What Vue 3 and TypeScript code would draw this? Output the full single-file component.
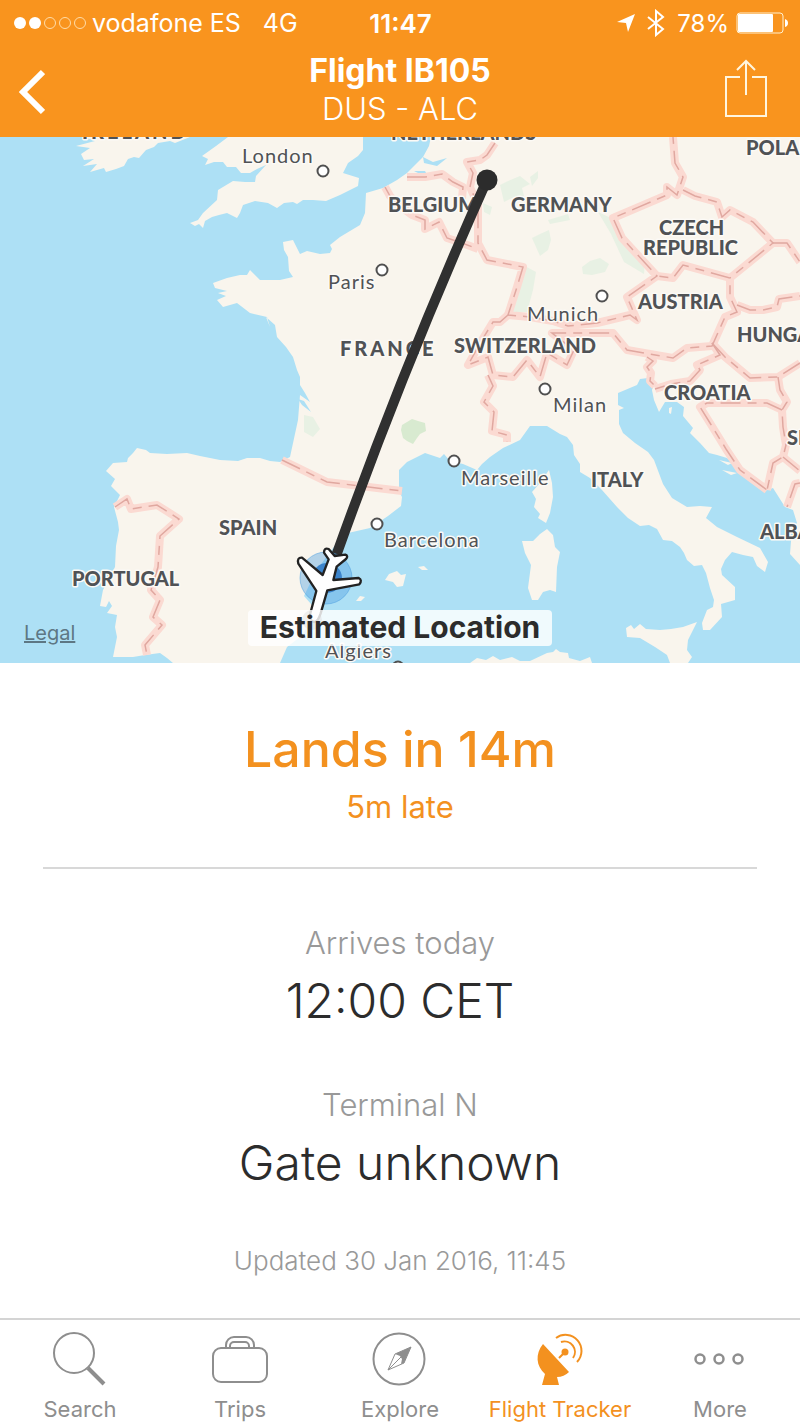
<script setup lang="ts">
import { ref } from 'vue'

type TabId = 'search' | 'trips' | 'explore' | 'tracker' | 'more'

interface MapLabel {
  text: string
  x: number
  y: number
  kind: 'country' | 'wide' | 'city'
}

const tabs: { id: TabId; label: string }[] = [
  { id: 'search', label: 'Search' },
  { id: 'trips', label: 'Trips' },
  { id: 'explore', label: 'Explore' },
  { id: 'tracker', label: 'Flight Tracker' },
  { id: 'more', label: 'More' },
]
const activeTab = ref<TabId>('tracker')

const labels: MapLabel[] = [
  { text: 'IRELAND', x: 82, y: 139, kind: 'wide' },
  { text: 'NETHERLANDS', x: 391, y: 140, kind: 'country' },
  { text: 'POLAND', x: 746, y: 155, kind: 'country' },
  { text: 'BELGIUM', x: 388, y: 212, kind: 'country' },
  { text: 'GERMANY', x: 511, y: 212, kind: 'country' },
  { text: 'CZECH', x: 659, y: 235, kind: 'country' },
  { text: 'REPUBLIC', x: 643, y: 255, kind: 'country' },
  { text: 'AUSTRIA', x: 638, y: 309, kind: 'country' },
  { text: 'HUNGARY', x: 737, y: 342, kind: 'country' },
  { text: 'FRANCE', x: 340, y: 356, kind: 'wide' },
  { text: 'SWITZERLAND', x: 454, y: 353, kind: 'country' },
  { text: 'CROATIA', x: 664, y: 400, kind: 'country' },
  { text: 'SERBIA', x: 787, y: 445, kind: 'country' },
  { text: 'ITALY', x: 591, y: 487, kind: 'country' },
  { text: 'ALBANIA', x: 760, y: 539, kind: 'country' },
  { text: 'SPAIN', x: 219, y: 535, kind: 'country' },
  { text: 'PORTUGAL', x: 72, y: 586, kind: 'country' },
  { text: 'London', x: 242, y: 163, kind: 'city' },
  { text: 'Paris', x: 328, y: 289, kind: 'city' },
  { text: 'Munich', x: 527, y: 321, kind: 'city' },
  { text: 'Milan', x: 553, y: 412, kind: 'city' },
  { text: 'Marseille', x: 461, y: 485, kind: 'city' },
  { text: 'Barcelona', x: 384, y: 547, kind: 'city' },
  { text: 'Algiers', x: 325, y: 658, kind: 'city' },
]

const cityDots: [number, number][] = [
  [323, 171], [382, 270], [602, 296], [545, 389], [454, 461], [377, 524], [398, 667],
]

const land: string[] = [
  // Ireland
  'M84 137L95 141L76 146L90 148L81 154L84 160L94 159L83 166L97 164L90 172L104 168L106 172L116 169L124 166L128 159L134 157L139 158L146 150L154 147L158 143L170 141L175 143L190 137Z',
  // Great Britain
  'M228 137L216 146L202 156L208 159L205 165L214 162L223 162L227 167L236 167L241 173L250 173L257 169L266 165L256 176L255 182L245 182L233 181L218 190L217 200L203 213L198 220L190 223L195 226L199 224L203 228L205 221L212 217L219 215L227 213L237 218L240 213L243 205L255 201L268 203L277 208L284 203L293 202L297 204L303 200L313 200L326 201L340 195L358 186L359 178L343 173L348 163L358 156L363 150L363 137Z',
  // Continent
  'M431 137L429 146L423 157L407 173L397 180L383 188L366 193L365 213L360 225L340 237L330 245L332 249L330 253L320 254L307 251L300 254L293 240L283 242L284 250L288 257L289 271L293 277L280 280L266 280L260 280L250 270L247 275L240 275L227 278L213 283L215 288L227 291L218 293L226 296L217 300L223 307L237 303L250 313L267 317L270 327L266 317L275 325L277 337L286 347L293 357L297 370L300 377L300 385L305 393L310 402L300 395L298 420L290 457L280 462L270 461L260 458L247 458L238 461L220 460L200 456L187 453L167 454L150 453L146 450L137 448L133 453L128 458L127 462L113 463L106 471L115 479L111 486L120 495L114 507L118 522L119 530L116 546L115 567L103 590L100 606L106 607L109 601L112 606L107 613L117 615L115 627L117 637L113 657L133 657L145 655L160 653L167 658L173 663L280 663L287 647L300 637L318 612L304 596L316 571L336 544L348 533L370 528L388 516L401 506L402 497L399 491L399 470L407 462L425 453L440 458L444 454L450 461L463 464L477 470L482 464L490 457L503 448L520 440L530 426L547 426L560 434L567 437L573 445L574 455L580 464L580 472L590 478L602 490L617 507L628 518L640 526L649 525L657 529L663 540L672 541L680 547L684 553L687 560L694 566L702 565L706 573L710 588L714 600L713 607L707 610L702 623L703 630L710 630L722 617L721 604L735 600L735 587L722 575L721 569L725 560L732 552L743 555L753 557L757 566L765 572L768 562L760 548L737 537L717 527L706 518L712 507L700 506L687 507L672 498L663 484L654 460L648 452L635 443L623 433L619 424L619 410L624 408L618 405L618 393L637 385L640 379L648 378L655 382L652 390L654 400L659 412L665 402L677 402L684 407L683 416L693 428L690 433L700 443L709 453L717 455L727 458L743 473L767 490L773 488L785 507L793 510L797 523L791 541L790 554L800 565L800 137Z',
  // Sardinia
  'M547 529L553 535L555 547L560 552L557 567L556 592L550 590L543 592L538 600L532 600L528 588L531 565L525 553L522 541L533 541L540 534Z',
  // Corsica
  'M549 470L552 483L553 497L550 513L546 523L538 518L540 514L534 507L536 499L532 492L540 483Z',
  // Sicily
  'M626 628L631 625L634 629L640 624L646 629L660 630L671 629L683 627L697 622L688 640L687 650L692 657L688 663L670 663L667 655L655 647L640 638L627 637Z',
  // Balearic islands
  'M385 580L389 574L397 571L401 575L406 574L403 586L397 587L393 582Z',
  'M418 567L424 566L428 570L422 570Z',
  'M356 601L360 596L365 597L361 601Z',
  // Dalmatian islands
  'M669 408L672 407L671 414L669 413Z',
  'M719 460L732 463L728 465Z',
  'M722 470L737 473L731 475Z',
  // North Africa
  'M470 663L477 658L486 660L493 656L500 660L512 657L520 661L530 661L547 653L553 652L556 649L560 652L568 653L569 658L580 661L590 657L592 663Z',
]

const borders: string[] = [
  'M115 507L127 499L131 509L157 505L179 519L160 536L158 567L151 590L160 600L153 617L162 625L145 645L147 655',
  'M282 460L327 482L402 491',
  'M385 187L390 196L400 206L412 215L425 220L425 229L439 222L447 238L462 243L478 249',
  'M407 177L425 177L442 174L453 182L463 187L462 199',
  'M495 143L487 155L480 160L467 162L473 173L470 187L478 205L478 243L487 260L523 267L517 287L508 315L530 317L553 321L568 326L597 323L630 315L637 320L627 297L657 276L622 238L613 218L667 195L667 187L677 195L683 177L675 163L673 137',
  'M508 315L500 322L493 322L482 340L468 365L488 357L493 375L513 377L527 360L540 377L547 353L567 365L574 350L552 333L613 333L627 350L673 358L687 348L712 346L725 317L737 312L730 297L730 278L683 265L673 278L657 276',
  'M683 190L695 196L717 202L722 217L730 210L753 222L773 243L730 278',
  'M773 243L787 243L800 262',
  'M737 305L750 310L763 310L777 307L779 299L800 296',
  'M712 343L720 355L697 365L700 370L690 381L671 384L655 389',
  'M647 357L653 361L647 367L651 373L650 381L655 386',
  'M712 343L725 357L750 378L778 377L800 363',
  'M778 377L780 390L787 402L782 410L783 427L786 445L783 457L773 463L767 490',
  'M783 457L800 471',
  'M782 410L767 403L707 403L700 407L710 423L726 449L740 470L767 490',
  'M800 483L795 484L787 507',
  'M488 375L493 386L484 402L494 412L492 431L507 435L507 442',
]

const forests: string[] = [
  'M500 185L508 181L520 176L530 184L522 188L524 196L514 197L504 202Z',
  'M483 203L492 207L490 215L484 212Z',
  'M523 265L536 272L533 290L527 312L512 312L517 287Z',
  'M532 238L540 234L549 230L551 240L548 250L540 256Z',
  'M582 267L590 261L600 258L609 264L605 272L592 275L583 274Z',
  'M530 177L538 171L538 178L532 186Z',
  'M548 220L568 214L570 220L550 224Z',
  'M598 212L611 218L622 238L645 262L644 274L624 262L611 234Z',
  'M304 415L313 417L320 429L313 437L304 432Z',
]
</script>

<template>
  <div class="screen">
    <header class="top">
      <div class="status">
        <div class="status-left">
          <svg class="signal" viewBox="0 0 74 14" aria-hidden="true">
            <circle v-for="n in 5" :key="n" :cx="15 * n - 8" cy="7" :r="n < 3 ? 6 : 5.5" :class="n < 3 ? 'on' : 'off'" />
          </svg>
          <span>vodafone ES</span>
          <span class="network">4G</span>
        </div>
        <strong class="clock">11:47</strong>
        <div class="status-right">
          <svg class="arrow" viewBox="0 0 20 20" aria-hidden="true"><path d="M19 1L12 19L10 10L1 9Z" /></svg>
          <svg class="bluetooth" viewBox="0 0 18 28" aria-hidden="true"><path d="M1 8L16 20L9 26V2L16 8L1 20" /></svg>
          <span class="charge">78%</span>
          <svg class="battery" viewBox="0 0 52 22" aria-hidden="true">
            <rect class="shell" x="1" y="1" width="46" height="20" rx="3" />
            <rect class="level" x="2" y="2" width="35" height="18" rx="1" />
            <path class="level" d="M49 7Q52 8 52 11T49 15Z" />
          </svg>
        </div>
      </div>
      <nav class="nav">
        <button class="nav-button back" type="button" aria-label="Back">
          <svg class="chevron" viewBox="0 0 28 46" aria-hidden="true"><path d="M26 3L6 23L26 43" /></svg>
        </button>
        <div class="titles">
          <h1>Flight IB105</h1>
          <p>DUS - ALC</p>
        </div>
        <button class="nav-button share" type="button" aria-label="Share">
          <svg class="share-icon" viewBox="0 0 44 60" aria-hidden="true">
            <path d="M17 19H3V58H43V19H29M23 37V3M14 12L23 3L32 12" />
          </svg>
        </button>
      </nav>
    </header>

    <section class="map" aria-label="Flight map">
      <svg class="chart" viewBox="0 137 800 526">
        <path v-for="(d, i) in land" :key="'l' + i" class="land" :d="d" />
        <path class="water" d="M423 157L433 162L447 158L437 166L424 163ZM414 171L425 171L429 178L420 174ZM298 399L304 401L311 412L302 405Z" />
        <path v-for="(d, i) in forests" :key="'f' + i" class="forest" :d="d" />
        <path class="forest deep" d="M402 425L407 422L412 419L418 421L425 423L426 431L420 434L417 438L413 444L407 441L403 438L401 430Z" />
        <path v-for="(d, i) in borders" :key="'c' + i" class="border-casing" :d="d" />
        <path v-for="(d, i) in borders" :key="'b' + i" class="border-line" :d="d" />
        <circle v-for="([x, y], i) in cityDots" :key="'d' + i" class="city-dot" :cx="x" :cy="y" r="5.5" />
        <text v-for="l in labels" :key="l.text" class="label" :class="l.kind" :x="l.x" :y="l.y">{{ l.text }}</text>

        <path class="route" d="M487 180Q405 363 336 556" />
        <circle class="origin" cx="487" cy="180" r="10.5" />
        <circle class="halo" cx="326" cy="578" r="26" />
        <circle class="core" cx="327" cy="578" r="15" />
        <circle class="target" cx="312" cy="620" r="10" />
        <g class="plane" transform="translate(260 400) scale(0.3333)">
          <path d="M206 447L224 468L256 464Q266 468 258 477L230 500L220 540L296 534Q308 540 298 553L202 571L182 640Q174 665 163 666Q148 664 151 640L169 573L115 491Q110 472 126 473L188 525L206 478L192 458Q192 442 206 447Z" />
        </g>
        <rect class="badge" x="248" y="610" width="304" height="36" rx="4" />
        <text class="badge-text" x="400" y="638">Estimated Location</text>
      </svg>
      <a class="legal" href="#legal">Legal</a>
    </section>

    <main class="details">
      <section class="summary">
        <h2>Lands in 14m</h2>
        <p>5m late</p>
      </section>
      <dl class="facts">
        <div class="fact">
          <dt>Arrives today</dt>
          <dd>12:00 CET</dd>
        </div>
        <div class="fact">
          <dt>Terminal N</dt>
          <dd>Gate unknown</dd>
        </div>
      </dl>
      <p class="updated">Updated 30 Jan 2016, 11:45</p>
    </main>

    <nav class="tabs" aria-label="Main">
      <button
        v-for="tab in tabs"
        :key="tab.id"
        type="button"
        class="tab"
        :class="{ active: tab.id === activeTab }"
        @click="activeTab = tab.id"
      >
        <svg class="tab-icon" viewBox="0 0 60 60" aria-hidden="true">
          <template v-if="tab.id === 'search'">
            <circle cx="24" cy="23" r="20" />
            <path class="handle" d="M38 38L54 54" />
          </template>
          <template v-else-if="tab.id === 'trips'">
            <rect x="3" y="18" width="54" height="34" rx="8" />
            <path d="M16 18V15A8 8 0 0 1 24 7H36A8 8 0 0 1 44 15V18" />
            <path d="M20 18V16A4 4 0 0 1 24 12H35A4 4 0 0 1 39 16V18Z" />
          </template>
          <template v-else-if="tab.id === 'explore'">
            <circle cx="29" cy="29" r="25.5" />
            <path class="fine" d="M41 17L18 40L25 24Z" />
            <path class="fine" d="M41 17L34 33L18 40" />
            <path class="solid" d="M41 17L25 24L30 26L32 29L31 34L34 33Z" />
          </template>
          <template v-else-if="tab.id === 'tracker'">
            <path class="solid" d="M13 14L39 42Q34 47 27 47L29 55H12L15 44C6 36 5 24 13 14Z" />
            <circle class="solid" cx="35" cy="22" r="3.5" />
            <path d="M35 22L29 28M31 12A10.5 10.5 0 0 1 43 28M26 8A16 16 0 0 1 47 32" />
          </template>
          <template v-else>
            <g class="dots">
              <circle cx="10" cy="29" r="4.5" />
              <circle cx="29" cy="29" r="4.5" />
              <circle cx="48" cy="29" r="4.5" />
            </g>
          </template>
        </svg>
        <span>{{ tab.label }}</span>
      </button>
    </nav>
  </div>
</template>

<style>
body {
  margin: 0;
  background: #fff;
}
</style>

<style scoped>
.screen {
  display: flex;
  flex-direction: column;
  min-height: 100vh;
  background: #fff;
  color: #2c2c2c;
  font-family: Inter, "Liberation Sans", sans-serif;
}

h1,
h2,
p,
dl,
dd {
  margin: 0;
}

svg {
  display: block;
}

button {
  padding: 0;
  border: 0;
  background: none;
  font: inherit;
  color: inherit;
}

.top {
  background: #f9941e;
  color: #fff;
}

.status {
  display: grid;
  grid-template-columns: 1fr auto 1fr;
  align-items: center;
  height: 46px;
  padding: 0 12px 0 13px;
  font-size: 25px;
}

.status-left,
.status-right {
  display: flex;
  align-items: center;
}

.status-right {
  justify-content: flex-end;
}

.signal {
  width: 74px;
  height: 14px;
  margin-right: 5px;
}

.signal .on {
  fill: #fff;
}

.signal .off {
  fill: none;
  stroke: #ffdca8;
}

.network {
  margin-left: 22px;
}

.clock {
  font-size: 26px;
  font-weight: 600;
}

.arrow {
  width: 20px;
  height: 20px;
  margin-right: 11px;
  fill: #fff;
}

.bluetooth {
  width: 18px;
  height: 28px;
  margin-right: 12px;
  fill: none;
  stroke: #fff;
  stroke-width: 2;
}

.charge {
  font-size: 24px;
}

.battery {
  width: 52px;
  height: 22px;
  margin-left: 7px;
}

.shell {
  fill: none;
  stroke: #fff0d0;
}

.level {
  fill: #fff;
}

.nav {
  display: grid;
  grid-template-columns: 80px 1fr 80px;
  align-items: center;
  height: 91px;
}

.nav-button {
  display: flex;
  align-items: center;
  height: 88px;
}

.back {
  padding-left: 17px;
}

.share {
  justify-content: flex-end;
  padding: 0 33px 8px 0;
}

.chevron {
  width: 28px;
  height: 46px;
  fill: none;
  stroke: #fff;
  stroke-width: 6;
}

.share-icon {
  width: 44px;
  height: 60px;
  fill: none;
  stroke: #fff6e0;
  stroke-width: 2;
}

.titles {
  padding-bottom: 4px;
  text-align: center;
}

.titles h1 {
  font-size: 32px;
  font-weight: 700;
  line-height: 38px;
}

.titles p {
  font-size: 31px;
  font-weight: 300;
  line-height: 38px;
}

.map {
  position: relative;
  overflow: hidden;
  background: #ade0f5;
}

.chart {
  width: 100%;
  height: auto;
}

.land {
  fill: #f9f5ed;
}

.water {
  fill: #ade0f5;
}

.forest {
  fill: #e8f1e4;
}

.forest.deep {
  fill: #d8ead0;
}

.border-casing {
  fill: none;
  stroke: #fbdad2;
  stroke-width: 8;
  stroke-linejoin: round;
}

.border-line {
  fill: none;
  stroke: #e0a8a0;
  stroke-width: 1.5;
  stroke-dasharray: 20 7 9 7;
}

.city-dot {
  fill: #fff;
  stroke: #505050;
  stroke-width: 2;
}

.label {
  fill: #505255;
  stroke: #fcfaf6;
  stroke-width: 3;
  stroke-linejoin: round;
  paint-order: stroke;
  font-family: Lato, sans-serif;
  font-size: 20px;
  font-weight: 900;
}

.label.wide {
  letter-spacing: 3px;
}

.label.city {
  font-weight: 400;
  letter-spacing: 1px;
}

.route {
  fill: none;
  stroke: #303030;
  stroke-width: 10;
}

.origin {
  fill: #2c2c2c;
}

.halo {
  fill: #4b9de0;
  fill-opacity: 0.4;
  stroke: #4b9de0;
  stroke-opacity: 0.5;
}

.core {
  fill: #3c84cb;
}

.target {
  fill: #303030;
  fill-opacity: 0.4;
}

.plane {
  fill: #fff;
  stroke: #222;
  stroke-width: 7;
  stroke-linejoin: round;
}

.badge {
  fill: #fff;
  fill-opacity: 0.82;
}

.badge-text {
  fill: #2c2c2c;
  font-size: 30px;
  font-weight: 700;
  text-anchor: middle;
}

.legal {
  position: absolute;
  bottom: 18px;
  left: 24px;
  color: #5d7784;
  font-size: 20px;
  line-height: 24px;
}

.details {
  flex: 1;
  padding: 0 43px;
  text-align: center;
}

.summary {
  padding: 54px 0 40px;
  border-bottom: 2px solid #d8d8d8;
  color: #f3911f;
}

.summary h2 {
  font-size: 50px;
  font-weight: 500;
  line-height: 64px;
}

.summary p {
  padding-top: 6px;
  font-size: 31px;
  line-height: 40px;
}

.facts {
  display: grid;
  gap: 54px;
  padding-top: 54px;
}

.fact dt {
  color: #999;
  font-size: 31px;
  font-weight: 300;
  line-height: 40px;
}

.fact dd {
  padding-top: 8px;
  font-size: 48px;
  font-weight: 300;
  line-height: 60px;
}

.updated {
  padding: 52px 0 38px;
  color: #999;
  font-size: 26px;
  font-weight: 300;
  line-height: 32px;
}

.tabs {
  display: grid;
  grid-template-columns: repeat(5, 1fr);
  border-top: 2px solid #d4d4d4;
}

.tab {
  display: flex;
  flex-direction: column;
  align-items: center;
  gap: 4px;
  padding-top: 10px;
  color: #8e8e8e;
  font-size: 22px;
  line-height: 30px;
}

.tab.active {
  color: #f3911f;
}

.tab-icon {
  width: 60px;
  height: 60px;
  fill: none;
  stroke: currentColor;
  stroke-width: 2;
}

.tab-icon .handle {
  stroke-width: 4;
}

.tab-icon .fine {
  stroke-width: 1;
}

.tab-icon .solid {
  fill: currentColor;
  stroke: none;
}

.tab-icon .dots {
  stroke-width: 2.5;
}
</style>
